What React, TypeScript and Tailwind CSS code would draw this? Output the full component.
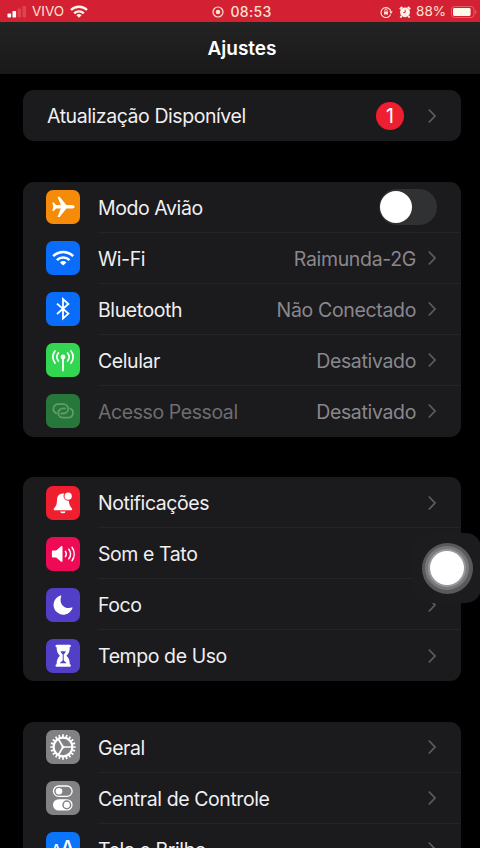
import React from 'react';

type IconName =
  | 'airplane' | 'wifi' | 'bluetooth' | 'cellular' | 'hotspot'
  | 'bell' | 'sound' | 'moon' | 'hourglass'
  | 'gear' | 'controls' | 'display';

interface Item {
  label: string;
  icon?: IconName;
  tile?: string;
  value?: string;
  badge?: number;
  toggle?: boolean;
  disabled?: boolean;
}

const groups: Item[][] = [
  [{ label: 'Atualização Disponível', badge: 1 }],
  [
    { label: 'Modo Avião', icon: 'airplane', tile: 'bg-[#f68b09]', toggle: true },
    { label: 'Wi-Fi', icon: 'wifi', tile: 'bg-[#0a6cfb]', value: 'Raimunda-2G' },
    { label: 'Bluetooth', icon: 'bluetooth', tile: 'bg-[#0a6cfb]', value: 'Não Conectado' },
    { label: 'Celular', icon: 'cellular', tile: 'bg-[#33d651]', value: 'Desativado' },
    { label: 'Acesso Pessoal', icon: 'hotspot', tile: 'bg-[#27763a]', value: 'Desativado', disabled: true },
  ],
  [
    { label: 'Notificações', icon: 'bell', tile: 'bg-[#f01f2f]' },
    { label: 'Som e Tato', icon: 'sound', tile: 'bg-[#ee0a54]' },
    { label: 'Foco', icon: 'moon', tile: 'bg-[#513fc8]' },
    { label: 'Tempo de Uso', icon: 'hourglass', tile: 'bg-[#513fc8]' },
  ],
  [
    { label: 'Geral', icon: 'gear', tile: 'bg-[#828184]' },
    { label: 'Central de Controle', icon: 'controls', tile: 'bg-[#828184]' },
    { label: 'Tela e Brilho', icon: 'display', tile: 'bg-[#0a74fb]' },
  ],
];

const teeth = Array.from({ length: 20 }, (_, i) => i * 18);

const glyphs: Record<IconName, React.ReactNode> = {
  airplane: (
    <path
      fill="#fff"
      d="M28.6 16.8c0-1.1-1.4-1.8-3-1.8h-5.2L14 7.2c-.3-.4-.6-.5-1-.5h-1.5l3.3 8.3H10L7.9 12.5H6.3l1 4.3-1 4.3h1.6l2.1-2.5h4.8l-3.3 8.3H13c.4 0 .7-.1 1-.5l6.4-7.8h5.2c1.6 0 3-.7 3-1.8z"
    />
  ),
  wifi: (
    <g fill="none" stroke="#fff" strokeWidth="2.6">
      <path d="M7.2 15.2a14 14 0 0 1 20 0" />
      <path d="M10.9 19.1a8.8 8.8 0 0 1 12.6 0" />
      <path d="M17.2 24.6l-3.2-3.2a4.6 4.6 0 0 1 6.4 0z" fill="#fff" stroke="none" />
    </g>
  ),
  bluetooth: (
    <path d="M11 11.6l11.4 10-5.4 4.9V7.1l5.4 4.9L11 22" fill="none" stroke="#fff" strokeWidth="1.8" />
  ),
  cellular: (
    <g fill="none" stroke="#fff" strokeWidth="1.8" strokeLinecap="round">
      <circle cx="17" cy="14" r="2.4" fill="#fff" stroke="none" />
      <path d="M17 14v13.4" />
      <path d="M12.4 18a6.2 6.2 0 0 1 0-8M21.6 10a6.2 6.2 0 0 1 0 8" />
      <path d="M9 20a9.6 9.6 0 0 1 0-12M25 8a9.6 9.6 0 0 1 0 12" />
    </g>
  ),
  hotspot: (
    <g fill="none" stroke="#5f9d69" strokeWidth="1.8" strokeLinecap="round">
      <path d="M10.3 19.3a4.8 4.8 0 0 1 1.9-9.2h5.2a4.7 4.7 0 0 1 0 9.4h-2.2" />
      <path d="M24.1 14.5a4.8 4.8 0 0 1-1.9 9.2H17a4.7 4.7 0 0 1 0-9.4h2.2" />
    </g>
  ),
  bell: (
    <g fill="#fff">
      <path d="M16.8 7.4c-4 0-5.8 3-5.8 6.4 0 4.4-1 6.4-3 8.6-.7.8-.3 1.8.8 1.8h16.3c1.1 0 1.5-1 .8-1.8-1.8-2-2.8-4-3-7.6a4.8 4.8 0 0 1-4.6-7.3 7 7 0 0 0-1.5-.1z" />
      <path d="M14.1 25.4h5.6a2.9 2.6 0 0 1-5.6 0z" />
      <circle cx="22.2" cy="10.2" r="3.6" />
    </g>
  ),
  sound: (
    <g fill="none" stroke="#fff" strokeWidth="1.5" strokeLinecap="round">
      <path d="M7 13.4h3.2l4.6-3.9c.9-.7 1.7-.4 1.7.6v13.8c0 1-.8 1.3-1.7.6l-4.6-3.9H7c-.7 0-1.1-.4-1.1-1.1v-5c0-.7.4-1.1 1.1-1.1z" fill="#fff" stroke="none" />
      <path d="M19.4 14.4a4.6 4.6 0 0 1 0 5.2M22.8 12.2a8 8 0 0 1 0 9.6M26 10.3a11.5 11.5 0 0 1 0 13.4" />
    </g>
  ),
  moon: (
    <path
      fill="#fff"
      d="M14.6 7.6c.5-.2.8.1.6.6-2.6 7.6 3 13.4 10.6 11.3.6-.2.9.2.6.7a9.7 9.7 0 1 1-11.8-12.6z"
    />
  ),
  hourglass: (
    <g>
      <path
        fill="#fff"
        d="M11 5.7h12.4a1.3 1.3 0 0 1 .4 2.6c-.1 4-1 6.2-3.3 8.5 2.3 2.3 3.2 4.5 3.3 8.4a1.3 1.3 0 0 1-.4 2.6H11a1.3 1.3 0 0 1-.4-2.6c.1-3.9 1-6.1 3.3-8.4-2.3-2.3-3.2-4.5-3.3-8.5a1.3 1.3 0 0 1 .4-2.6z"
      />
      <path d="M14.6 12.2h5.2c-.4 1.4-1.1 2.3-2.1 3.2v5.6c0 1.3 2 1.9 2.9 3.3h-6.8c.9-1.4 2.9-2 2.9-3.3v-5.6c-1-.9-1.7-1.8-2.1-3.2z" fill="#513fc8" />
    </g>
  ),
  gear: (
    <g fill="none" stroke="#fff">
      <circle cx="17" cy="17" r="9.4" strokeWidth="2.2" />
      {teeth.map(a => (
        <path key={a} d="M17 6.9V4.3" strokeWidth="1.7" transform={`rotate(${a} 17 17)`} />
      ))}
      <path d="M17 17h9.4M17 17l-4.8-8.2M17 17l-4.8 8.2" strokeWidth="1.7" />
      <circle cx="17" cy="17" r="1.5" fill="#fff" stroke="none" />
    </g>
  ),
  controls: (
    <g>
      <rect x="7.5" y="5" width="18.6" height="10.4" rx="5.2" fill="none" stroke="#fff" strokeWidth="1.3" />
      <circle cx="13" cy="10.2" r="3.3" fill="#fff" />
      <rect x="7" y="18.2" width="19.6" height="11.4" rx="5.7" fill="#fff" />
      <circle cx="20.8" cy="23.9" r="3.8" fill="none" stroke="#828184" strokeWidth="1.5" />
    </g>
  ),
  display: (
    <g fill="#fff" fontFamily="Inter, 'Liberation Sans', sans-serif" fontWeight="500" letterSpacing="0">
      <text x="5" y="23.2" fontSize="15">A</text>
      <text x="14.2" y="23.2" fontSize="20.5">A</text>
    </g>
  ),
};

const Chevron = () => (
  <svg width="9" height="16" viewBox="0 0 9 16" fill="none" className="mt-px shrink-0">
    <path d="M0.8 1.5l6.2 6.5-6.2 6.5" stroke="#5c5b5f" strokeWidth="1.8" />
  </svg>
);

const Row: React.FC<{ item: Item; last: boolean }> = ({ item, last }) => (
  <div className="flex h-[51px] items-center pl-[23px]">
    {item.icon && (
      <div className={`mr-[18px] h-[34px] w-[34px] shrink-0 overflow-hidden rounded-[7px] ${item.tile}`}>
        <svg width="34" height="34" viewBox="0 0 34 34">{glyphs[item.icon]}</svg>
      </div>
    )}
    <div className={`flex h-full flex-1 items-center border-b pr-6 ${last ? 'border-transparent' : 'border-[#242326]'}`}>
      <span
        className={`flex-1 whitespace-nowrap pt-1 ${item.icon ? 'tracking-[-0.42px]' : 'pl-px tracking-[-0.43px]'} ${item.disabled ? 'text-[#6e6d71]' : 'text-[#f0eff2]'}`}
      >
        {item.label}
      </span>
      {item.value && <span className="mr-3 pt-1 tracking-[-0.34px] text-[#89888d]">{item.value}</span>}
      {item.badge && (
        <span className="mt-px mr-6 flex h-7 w-7 items-center justify-center rounded-full bg-[#ee1f30] pt-0.5 text-white">
          {item.badge}
        </span>
      )}
      {item.toggle ? (
        <div className="mt-px flex h-9 w-[58px] items-center rounded-full bg-[#2f3132] px-px">
          <div className="h-8 w-8 rounded-full bg-white" />
        </div>
      ) : (
        <Chevron />
      )}
    </div>
  </div>
);

const StatusBar = () => (
  <div className="flex h-[22px] items-center bg-[#d32033] pt-px text-[13.5px] text-[#fbe3cf]">
    <div className="flex flex-1 items-center pl-[7px]">
      <svg width="21" height="12" viewBox="0 0 21 12" className="mr-1">
        <rect x="0.5" y="7.5" width="3.6" height="4" rx="0.8" fill="#fff" />
        <rect x="5.5" y="5" width="3.6" height="6.5" rx="0.8" fill="#fff" />
        <rect x="10.5" y="2.5" width="3.6" height="9" rx="0.8" fill="#de4450" />
        <rect x="15.5" y="0" width="3.6" height="11.5" rx="0.8" fill="#de4450" />
      </svg>
      <span className="mr-[6px]">VIVO</span>
      <svg width="18" height="13" viewBox="0 0 18 13" fill="none" stroke="#fff4e6" strokeWidth="2.4">
        <path d="M1 5a11.4 11.4 0 0 1 16 0" />
        <path d="M4.2 8.4a6.8 6.8 0 0 1 9.6 0" />
        <path d="M9 12.8L6.4 10.2a3.7 3.7 0 0 1 5.2 0z" fill="#fff4e6" stroke="none" />
      </svg>
    </div>
    <div className="flex items-center gap-[6px]">
      <svg width="12" height="12" viewBox="0 0 12 12">
        <circle cx="6" cy="6" r="5" fill="none" stroke="#fbe3cf" strokeWidth="1.2" />
        <circle cx="6" cy="6" r="2.3" fill="#fbe3cf" />
      </svg>
      <span className="text-[14px] font-medium tracking-[0.3px]">08:53</span>
    </div>
    <div className="flex flex-1 items-center justify-end pr-[3px]">
      <svg width="13" height="12" viewBox="0 0 13 12" className="mr-[6px]">
        <path d="M10.6 8.6A5 5 0 1 1 11 6" fill="none" stroke="#fbe3cf" strokeWidth="1.2" />
        <path d="M9.3 5.6h3.4L11 8z" fill="#fbe3cf" />
        <rect x="4" y="5.4" width="4" height="3.2" rx="0.5" fill="#fbe3cf" />
        <path d="M4.8 5.6V4.4a1.2 1.2 0 0 1 2.4 0v1.2" fill="none" stroke="#fbe3cf" strokeWidth="0.9" />
      </svg>
      <svg width="12" height="12" viewBox="0 0 12 12" className="mr-[5px]">
        <circle cx="6" cy="6.3" r="4.9" fill="#fff4e6" />
        <path d="M0.8 3.2L3.2 0.8M11.2 3.2L8.8 0.8M2.6 10l-1.2 1.6M9.4 10l1.2 1.6" stroke="#fff4e6" strokeWidth="1.9" />
        <path d="M6.2 3.8v2.7H4.2" fill="none" stroke="#d32033" strokeWidth="0.9" />
      </svg>
      <span className="mr-[5px]">88%</span>
      <svg width="26" height="12" viewBox="0 0 26 12">
        <rect x="0.5" y="0.5" width="22.5" height="11" rx="3" fill="none" stroke="#e0616a" />
        <rect x="2" y="2" width="17.6" height="8" rx="1.4" fill="#fffbe8" />
        <path d="M24.2 4v4a2.2 2.2 0 0 0 0-4z" fill="#e0616a" />
      </svg>
    </div>
  </div>
);

export default function App() {
  return (
    <div className="relative h-[848px] w-[480px] overflow-hidden bg-black font-[Inter,'Liberation_Sans',sans-serif] text-[19.5px]">
      <StatusBar />
      <header className="flex h-[52px] items-center justify-center bg-linear-to-b from-[#232324] to-[#19191a] pt-[3px] pl-1 text-[19px] font-semibold text-white">
        Ajustes
      </header>

      <main className="flex flex-col gap-[40.5px] pr-[19px] pl-[23px] pt-4">
        {groups.map((items, i) => (
          <section key={i} className="rounded-[11px] bg-[#1b1a1c]">
            {items.map((item, j) => (
              <Row key={item.label} item={item} last={j === items.length - 1} />
            ))}
          </section>
        ))}
      </main>

      {/* AssistiveTouch button */}
      <div className="absolute top-[533px] left-[413px] flex h-[70px] w-[68px] items-center justify-center rounded-[15px] bg-[#1c1b1d]">
        <div className="flex h-[51px] w-[51px] items-center justify-center rounded-full bg-[#59585a]">
          <div className="flex h-[44px] w-[44px] items-center justify-center rounded-full bg-[#79787a]">
            <div className="flex h-[38px] w-[38px] items-center justify-center rounded-full bg-[#99989a]">
              <div className="h-[34px] w-[34px] rounded-full bg-white" />
            </div>
          </div>
        </div>
      </div>
    </div>
  );
}
